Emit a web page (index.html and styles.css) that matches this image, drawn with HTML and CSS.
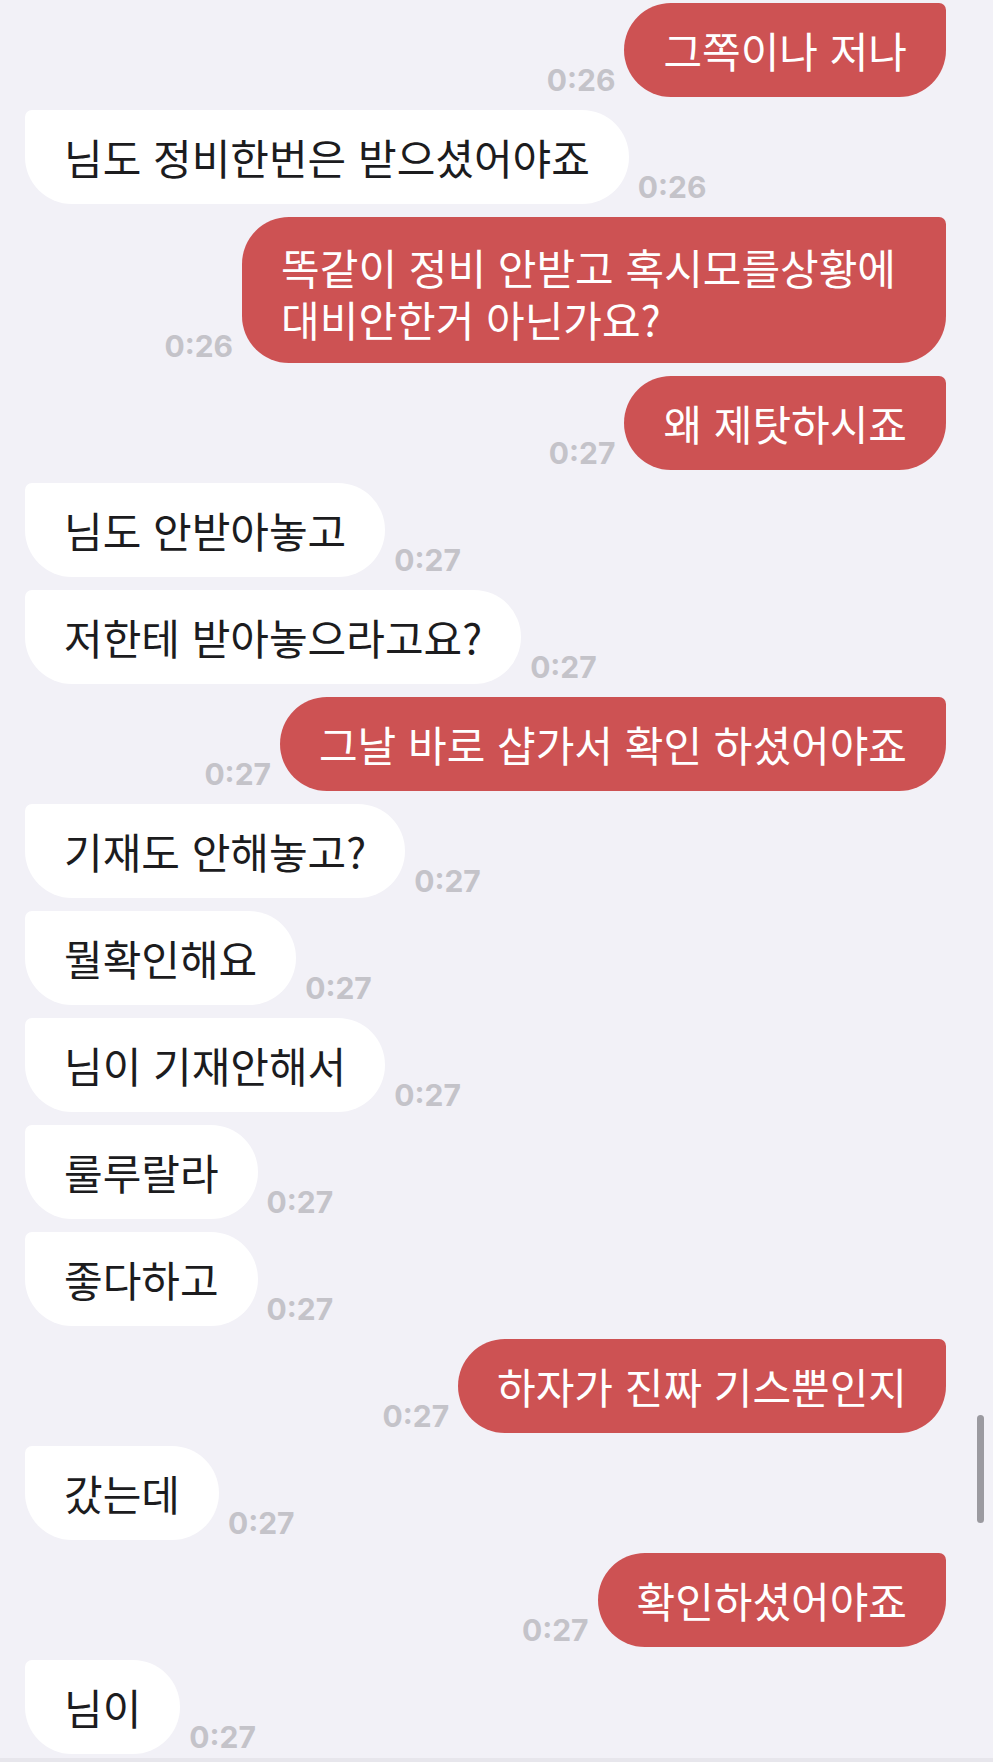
FILE: index.html
```html
<!DOCTYPE html>
<html lang="ko">

<head>
    <meta charset="UTF-8">
    <meta name="viewport" content="width=device-width, initial-scale=1.0">
    <title>채팅</title>
    <link rel="stylesheet" href="styles.css">
</head>

<body>
    <div class="screen">
        <div class="chat">
            <div class="row sent">
                <span class="time">0:26</span>
                <div class="bubble">그쪽이나 저나</div>
            </div>
            <div class="row recv">
                <div class="bubble">님도 정비한번은 받으셨어야죠</div>
                <span class="time">0:26</span>
            </div>
            <div class="row sent">
                <span class="time">0:26</span>
                <div class="bubble multi">
                    <span class="line">똑같이 정비 안받고 혹시모를상황에</span>
                    <span class="line">대비안한거 아닌가요?</span>
                </div>
            </div>
            <div class="row sent">
                <span class="time">0:27</span>
                <div class="bubble">왜 제탓하시죠</div>
            </div>
            <div class="row recv">
                <div class="bubble">님도 안받아놓고</div>
                <span class="time">0:27</span>
            </div>
            <div class="row recv">
                <div class="bubble">저한테 받아놓으라고요?</div>
                <span class="time">0:27</span>
            </div>
            <div class="row sent">
                <span class="time">0:27</span>
                <div class="bubble">그날 바로 샵가서 확인 하셨어야죠</div>
            </div>
            <div class="row recv">
                <div class="bubble">기재도 안해놓고?</div>
                <span class="time">0:27</span>
            </div>
            <div class="row recv">
                <div class="bubble">뭘확인해요</div>
                <span class="time">0:27</span>
            </div>
            <div class="row recv">
                <div class="bubble">님이 기재안해서</div>
                <span class="time">0:27</span>
            </div>
            <div class="row recv">
                <div class="bubble">룰루랄라</div>
                <span class="time">0:27</span>
            </div>
            <div class="row recv">
                <div class="bubble">좋다하고</div>
                <span class="time">0:27</span>
            </div>
            <div class="row sent">
                <span class="time">0:27</span>
                <div class="bubble">하자가 진짜 기스뿐인지</div>
            </div>
            <div class="row recv">
                <div class="bubble">갔는데</div>
                <span class="time">0:27</span>
            </div>
            <div class="row sent">
                <span class="time">0:27</span>
                <div class="bubble">확인하셨어야죠</div>
            </div>
            <div class="row recv">
                <div class="bubble">님이</div>
                <span class="time">0:27</span>
            </div>
        </div>
        <div class="bottom-bar"></div>
        <div class="scrollbar"></div>
    </div>
</body>

</html>
```

FILE: styles.css
```css
body {
    margin: 0;
    background-color: #f2f1f7;
    font-family: "Noto Sans CJK KR", sans-serif;
}

.screen {
    position: relative;
    height: 100vh;
    display: flex;
    flex-direction: column;
    overflow: hidden;
}

.chat {
    flex: 1;
    display: flex;
    flex-direction: column;
    gap: 13px;
    padding: 3px 47px 0 25px;
    overflow: hidden;
}

.row {
    display: flex;
    align-items: flex-end;
    gap: 9px;
}

.row.sent {
    justify-content: flex-end;
}

.bubble {
    padding: 21px 39px;
    font-size: 42px;
    line-height: 52px;
    white-space: nowrap;
}

.bubble.multi {
    display: flex;
    flex-direction: column;
    padding-right: 50px;
}

.bubble .line {
    display: block;
    height: 52px;
    line-height: 46px;
    padding-top: 6px;
    box-sizing: border-box;
}

.sent .bubble {
    background-color: #cd5253;
    color: #fff;
    border-radius: 47px 7px 47px 47px;
}

.recv .bubble {
    background-color: #fff;
    color: #1c1c1e;
    border-radius: 7px 47px 47px 47px;
}

.time {
    font-family: Inter, "Liberation Sans", sans-serif;
    font-size: 30px;
    font-weight: 700;
    line-height: 1;
    color: #c4c3c9;
    margin-bottom: 2px;
}

.bottom-bar {
    height: 4px;
    background-color: #e7e6ec;
}

.scrollbar {
    position: absolute;
    right: 9px;
    top: 1415px;
    width: 7px;
    height: 108px;
    border-radius: 4px;
    background-color: #9b9aa0;
}
```
